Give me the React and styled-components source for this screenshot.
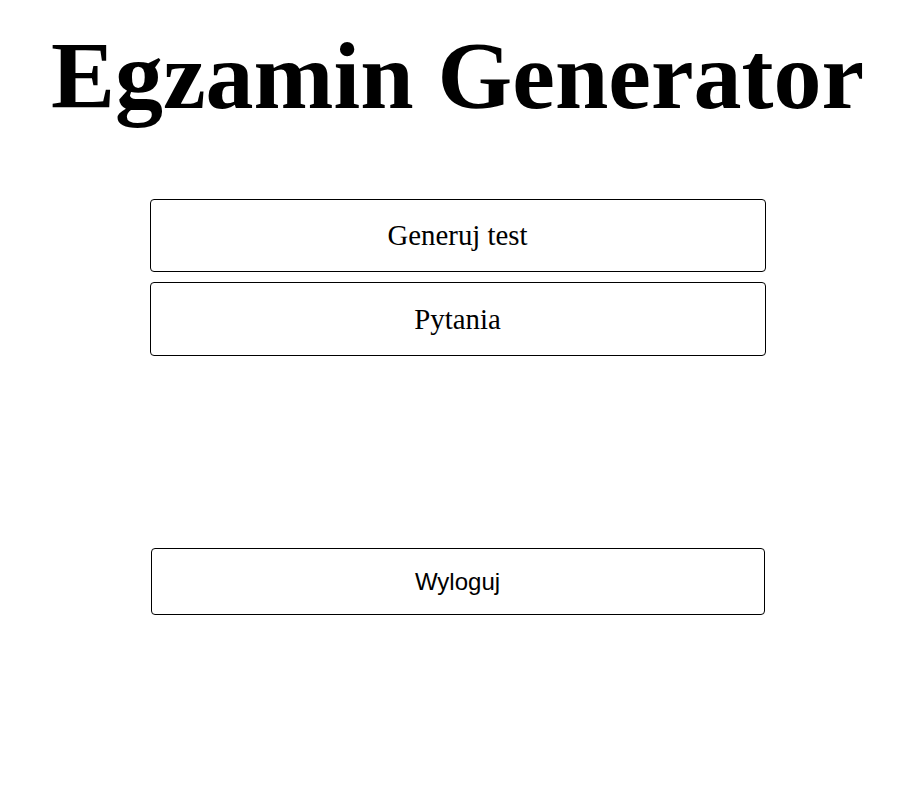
import React from "react";
import styled, { createGlobalStyle } from "styled-components";

const Global = createGlobalStyle`
  html, body { margin: 0; padding: 0; background: #fff; }
  body { font-family: "Liberation Serif", "Times New Roman", serif; color: #000; }
`;

const Page = styled.main`
  display: flex;
  flex-direction: column;
  align-items: center;
  padding-top: 20px;
`;

const Title = styled.h1`
  margin: 0;
  font-family: "Liberation Serif", "Times New Roman", serif;
  font-weight: bold;
  font-size: 96px;
  line-height: normal;
  text-align: center;
  white-space: nowrap;
  padding-left: 4px;
`;

const Menu = styled.nav`
  display: flex;
  flex-direction: column;
  gap: 10px;
  margin-top: 68px;
  padding-left: 4px;
  width: 616px;
  box-sizing: content-box;
`;

const MenuButton = styled.button`
  box-sizing: border-box;
  width: ${(p) => p.$width || 616}px;
  height: ${(p) => p.$height || 73}px;
  margin: ${(p) => p.$offset || 0}px auto 0;
  background: #fff;
  border: 1px solid #000;
  border-radius: 4px;
  color: #000;
  font-family: ${(p) =>
    p.$sans
      ? '"Liberation Sans", Arial, sans-serif'
      : '"Liberation Serif", "Times New Roman", serif'};
  font-size: ${(p) => (p.$sans ? 24 : 28.8)}px;
  line-height: normal;
  cursor: pointer;
  padding: 0;
`;

export default function App() {
  return (
    <>
      <Global />
      <Page>
        <Title>Egzamin Generator</Title>
        <Menu>
          <MenuButton>Generuj test</MenuButton>
          <MenuButton $height={74}>Pytania</MenuButton>
          <MenuButton $sans $width={614} $height={67} $offset={182}>
            Wyloguj
          </MenuButton>
        </Menu>
      </Page>
    </>
  );
}
